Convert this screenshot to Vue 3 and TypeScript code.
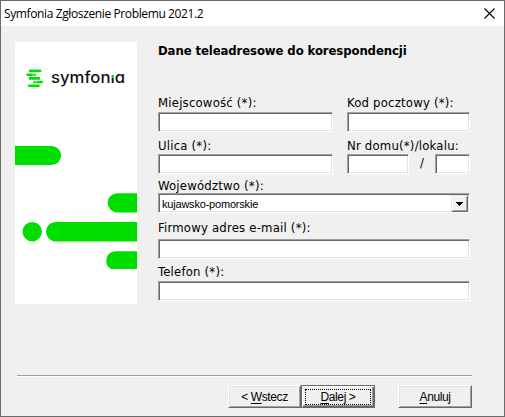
<template>
  <div class="window">
    <header class="titlebar">
      <span class="titlebar__text">Symfonia Zgłoszenie Problemu 2021.2</span>
      <button class="titlebar__close" type="button" aria-label="Zamknij">
        <svg width="11" height="11" viewBox="0 0 11 11">
          <path d="M0.5 0.5L10.5 10.5M10.5 0.5L0.5 10.5" fill="none" stroke="#000" stroke-width="1.1" />
        </svg>
      </button>
    </header>

    <main class="content">
      <svg class="banner" width="122" height="262" viewBox="0 0 122 262">
        <rect width="122" height="262" fill="#fff" />
        <g fill="#00de00">
          <rect x="14" y="27.6" width="12.3" height="2.6" rx="1" />
          <rect x="11.3" y="31.4" width="6.7" height="2.5" rx="1" />
          <rect x="18.3" y="31.4" width="2.5" height="2.5" rx="1" />
          <rect x="13.7" y="35.1" width="11.5" height="2.6" rx="1" />
          <rect x="18.3" y="38.8" width="2.5" height="2.5" rx="1" />
          <rect x="21.4" y="38.8" width="6.6" height="2.5" rx="1" />
          <rect x="13" y="42.5" width="11.8" height="2.6" rx="1" />
        </g>
        <text class="banner__name" x="36" y="41.3" textLength="74" lengthAdjust="spacingAndGlyphs">symfonia</text>
        <rect x="96" y="28" width="4" height="7.4" fill="#fff" />
        <circle cx="97.7" cy="34" r="1.3" fill="#00de00" />
        <g fill="#00de00">
          <path d="M0 104H36.5A9.5 9.5 0 0 1 36.5 123H0Z" />
          <path d="M122 151.2H102.2A9.6 9.6 0 0 0 102.2 170.4H122Z" />
          <circle cx="17.2" cy="189.7" r="9.7" />
          <path d="M122 180H40.7A9.7 9.7 0 0 0 40.7 199.4H122Z" />
          <path d="M122 209.2H100.2A9.6 9.6 0 0 0 96 227H122Z" />
        </g>
      </svg>

      <form class="form" @submit.prevent>
        <h1 class="form__heading">Dane teleadresowe do korespondencji</h1>

        <div class="row row--city">
          <label class="field field--wide">
            <span class="label">Miejscowość (*):</span>
            <input v-model="form.city" class="input" type="text" />
          </label>
          <label class="field field--narrow">
            <span class="label">Kod pocztowy (*):</span>
            <input v-model="form.postCode" class="input" type="text" />
          </label>
        </div>

        <div class="row row--street">
          <label class="field field--wide">
            <span class="label">Ulica (*):</span>
            <input v-model="form.street" class="input" type="text" />
          </label>
          <div class="field field--narrow">
            <span class="label">Nr domu(*)/lokalu:</span>
            <div class="numbers">
              <input v-model="form.house" class="input input--house" type="text" />
              <span class="numbers__slash">/</span>
              <input v-model="form.flat" class="input input--flat" type="text" />
            </div>
          </div>
        </div>

        <div class="row row--region">
          <div class="field">
            <span class="label">Województwo (*):</span>
            <div class="input combo">
              <span class="combo__value">{{ form.region }}</span>
              <button class="combo__button" type="button" aria-label="Rozwiń">
                <svg width="7" height="4" viewBox="0 0 7 4" shape-rendering="crispEdges">
                  <path d="M0 0H7V1H6V2H5V3H4V4H3V3H2V2H1V1H0Z" />
                </svg>
              </button>
            </div>
          </div>
        </div>

        <div class="row row--email">
          <label class="field">
            <span class="label">Firmowy adres e-mail (*):</span>
            <input v-model="form.email" class="input" type="text" />
          </label>
        </div>

        <div class="row row--phone">
          <label class="field">
            <span class="label">Telefon (*):</span>
            <input v-model="form.phone" class="input" type="text" />
          </label>
        </div>
      </form>
    </main>

    <footer class="footer">
      <button class="button" type="button">
        <span class="button__text">&lt; <u>W</u>stecz</span>
      </button>
      <button class="button button--default" type="button">
        <span class="button__text"><u>D</u>alej &gt;</span>
      </button>
      <button class="button button--cancel" type="button">
        <span class="button__text"><u>A</u>nuluj</span>
      </button>
    </footer>
  </div>
</template>

<script setup lang="ts">
import { reactive } from 'vue'

interface ContactForm {
  city: string
  postCode: string
  street: string
  house: string
  flat: string
  region: string
  email: string
  phone: string
}

const form = reactive<ContactForm>({
  city: '',
  postCode: '',
  street: '',
  house: '',
  flat: '',
  region: 'kujawsko-pomorskie',
  email: '',
  phone: '',
})
</script>

<style>
body {
  margin: 0;
  overflow: hidden;
}
</style>

<style scoped>
.window {
  box-sizing: border-box;
  display: flex;
  flex-direction: column;
  width: 505px;
  height: 417px;
  border: 1px solid #6c6a6c;
  background: #f0f0f0;
  color: #000;
  font-family: 'DejaVu Sans Condensed', 'DejaVu Sans', sans-serif;
  font-size: 13px;
}

.titlebar {
  display: flex;
  justify-content: space-between;
  height: 25px;
  padding: 0 9px 0 3px;
  background: #fff;
}

.titlebar__text {
  font: 12px/25px 'Open Sans', 'Noto Sans', sans-serif;
  letter-spacing: -0.38px;
  white-space: nowrap;
}

.titlebar__close {
  display: flex;
  align-items: center;
  padding: 0;
  border: 0;
  background: none;
}

.content {
  display: flex;
  gap: 21px;
  height: 333px;
  padding: 16px 0 0 14px;
}

.banner {
  flex: none;
}

.banner__name {
  font-family: Inter, sans-serif;
  font-size: 15.5px;
  font-weight: 500;
  font-feature-settings: 'cv11';
  fill: #111;
}

.form {
  width: 312px;
}

.form__heading {
  height: 18px;
  margin: 0;
  font-size: 13px;
  letter-spacing: -0.1px;
  line-height: 18px;
  white-space: nowrap;
}

.row {
  display: flex;
  gap: 14px;
}

.row--city {
  --label-height: 17px;
  margin-top: 35px;
}

.row--street {
  --label-height: 16px;
  margin-top: 6px;
}

.row--region {
  --label-height: 15px;
  margin-top: 4px;
}

.row--email {
  --label-height: 19px;
  margin-top: 7px;
}

.row--phone {
  --label-height: 17px;
  margin-top: 5px;
}

.field {
  display: flex;
  flex: 1;
  flex-direction: column;
}

.field--wide {
  flex: 0 0 175px;
}

.label {
  height: var(--label-height);
  letter-spacing: 0.2px;
  line-height: 16px;
  white-space: nowrap;
}

.input {
  box-sizing: border-box;
  width: 100%;
  height: 20px;
  padding: 0 2px;
  border: 1px solid;
  border-color: #a0a0a0 #fff #fff #a0a0a0;
  border-radius: 0;
  outline: none;
  background: #fff;
  box-shadow: inset 1px 1px #696969, inset -1px -1px #e3e3e3;
  font: 11px 'Liberation Sans', sans-serif;
}

.numbers {
  display: flex;
  justify-content: space-between;
}

.input--house {
  width: 62px;
}

.input--flat {
  width: 35px;
}

.numbers__slash {
  height: 20px;
  line-height: 18px;
}

.combo {
  display: flex;
  justify-content: space-between;
  padding: 1px 1px 1px 3px;
}

.combo__value {
  letter-spacing: -0.2px;
  line-height: 19px;
  white-space: nowrap;
}

.combo__button {
  display: flex;
  align-items: center;
  justify-content: center;
  box-sizing: border-box;
  width: 17px;
  height: 17px;
  padding: 0;
  border: 1px solid;
  border-color: #e3e3e3 #696969 #696969 #e3e3e3;
  background: #f0f0f0;
  box-shadow: inset 1px 1px #fff, inset -1px -1px #a0a0a0;
}

.footer {
  display: flex;
  width: 455px;
  height: 33px;
  box-sizing: border-box;
  margin: 0 0 0 16px;
  padding: 9px 0 0 211px;
  border-top: 1px solid #a0a0a0;
  box-shadow: inset 0 1px #fff;
}

.button {
  box-sizing: border-box;
  flex: none;
  width: 73px;
  height: 23px;
  padding: 0;
  border: 1px solid;
  border-color: #fff #696969 #696969 #fff;
  background: #f0f0f0;
  box-shadow: inset 1px 1px #e3e3e3, inset -1px -1px #a0a0a0;
  color: #000;
  font: 12px/20px 'Liberation Sans', sans-serif;
  letter-spacing: -0.4px;
}

.button__text {
  display: block;
  white-space: nowrap;
}

.button u {
  text-underline-offset: 2px;
}

.button--default {
  width: 74px;
  padding: 2px 3px;
  border-color: #696969;
  box-shadow: inset 1px 1px #fff, inset -1px -1px #696969, inset -2px -2px #a0a0a0;
}

.button--default .button__text {
  border: 1px dotted #000;
  line-height: 14px;
}

.button--cancel {
  width: 74px;
  margin-left: 23px;
}
</style>
